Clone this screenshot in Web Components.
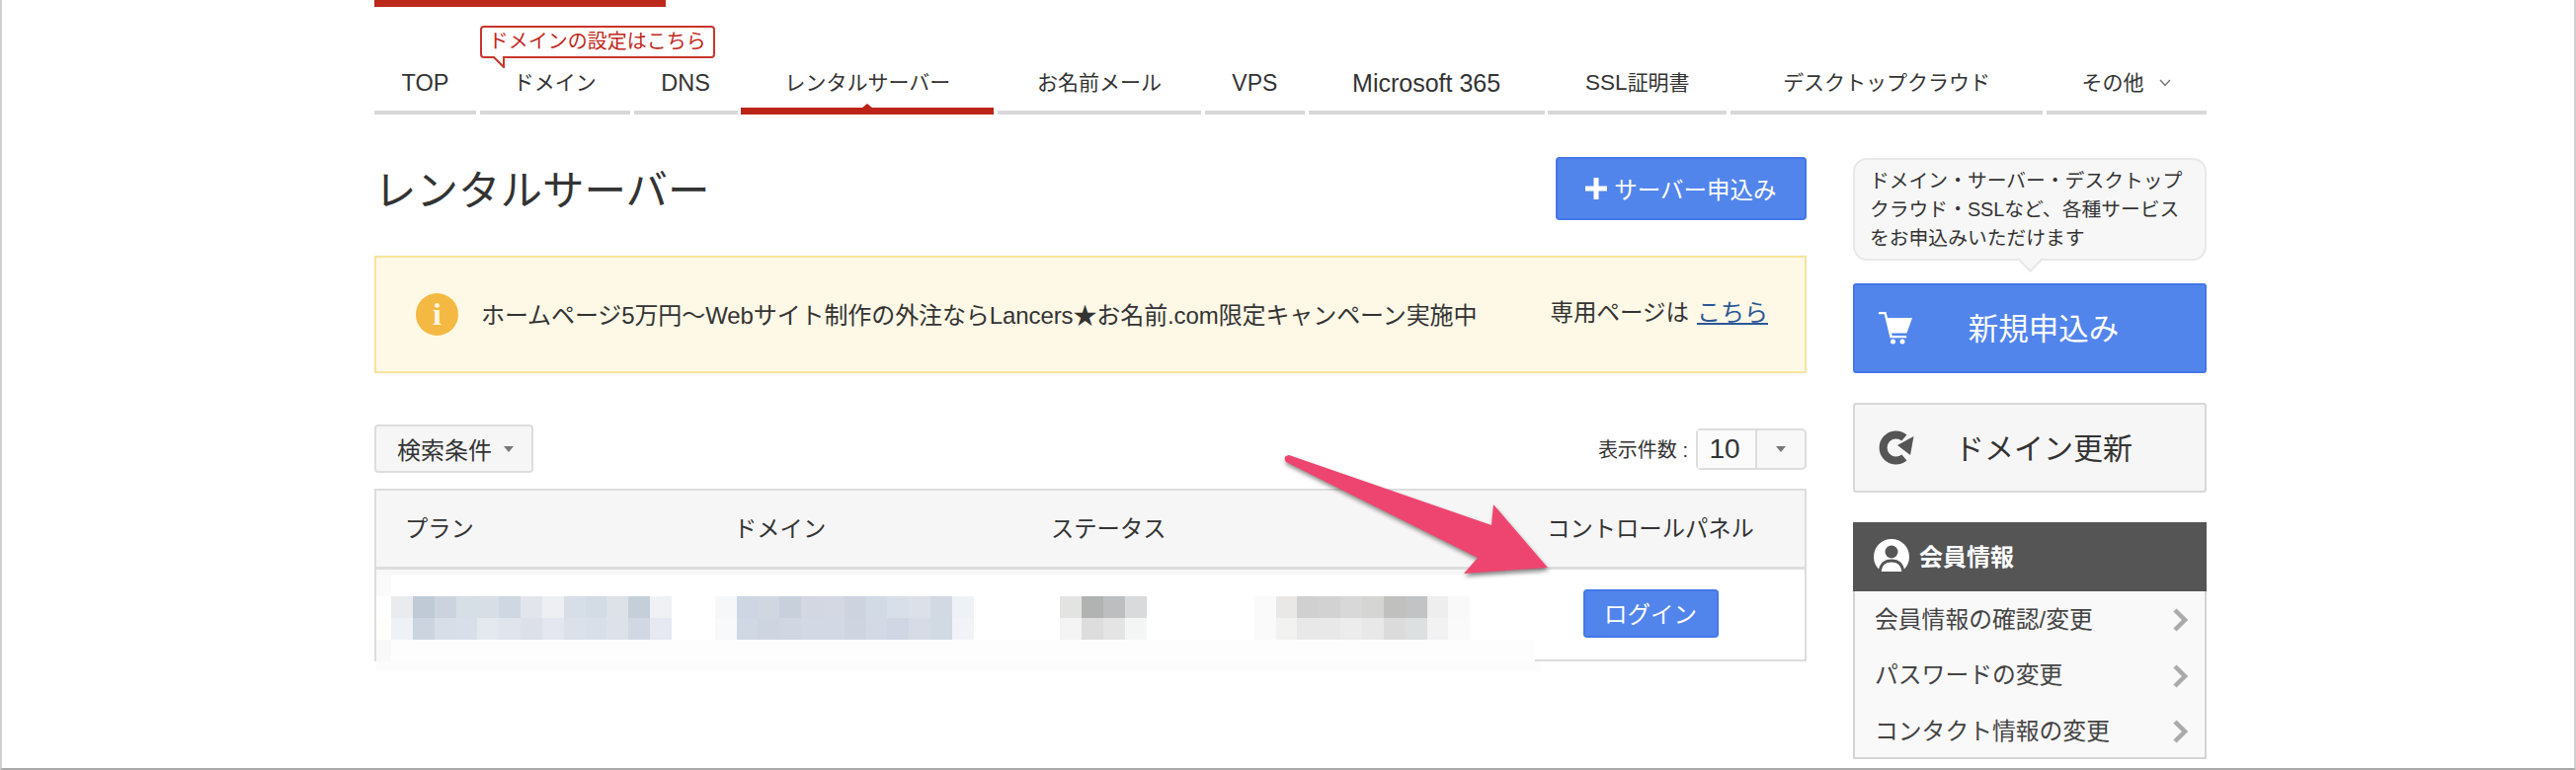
<!DOCTYPE html>
<html lang="ja">
<head>
<meta charset="utf-8">
<title>レンタルサーバー</title>
<style>
  html, body { margin: 0; height: 780px; overflow: hidden; background: #fff; }
  body { font-family: "Liberation Sans", "Noto Sans CJK JP", sans-serif; color: #333; }
</style>
</head>
<body>
<app-shell>
  <site-nav slot="nav">
    <nav-tab w="103" fs="23.5">TOP</nav-tab>
    <nav-tab w="152">ドメイン<hint-flag slot="flag">ドメインの設定はこちら</hint-flag></nav-tab>
    <nav-tab w="105" fs="23.5">DNS</nav-tab>
    <nav-tab w="256" active>レンタルサーバー</nav-tab>
    <nav-tab w="206">お名前メール</nav-tab>
    <nav-tab w="101" fs="23">VPS</nav-tab>
    <nav-tab w="239" fs="25">Microsoft 365</nav-tab>
    <nav-tab w="181"><span style="font-size:22.5px">SSL</span>証明書</nav-tab>
    <nav-tab w="316">デスクトップクラウド</nav-tab>
    <nav-tab w="162" more>その他</nav-tab>
  </site-nav>

  <page-head slot="main">
    レンタルサーバー
    <blue-button slot="action" big>サーバー申込み</blue-button>
  </page-head>
  <notice-bar slot="main" link="こちら" lead="専用ページは">ホームページ5万円〜Webサイト制作の外注ならLancers★お名前.com限定キャンペーン実施中</notice-bar>
  <result-toolbar slot="main"></result-toolbar>
  <plan-table slot="main"></plan-table>
  <pink-arrow slot="main"></pink-arrow>

  <side-bubble slot="side">ドメイン・サーバー・デスクトップ<br>クラウド・SSLなど、各種サービス<br>をお申込みいただけます</side-bubble>
  <side-action slot="side" kind="primary" icon="cart">新規申込み</side-action>
  <side-action slot="side" icon="renew">ドメイン更新</side-action>
  <member-panel slot="side"></member-panel>
</app-shell>

<script>
class AppShell extends HTMLElement {
  constructor() {
    super();
    this.attachShadow({ mode: "open" });
    this.shadowRoot.innerHTML = `
      <style>
        :host { display: block; box-sizing: border-box; height: 780px; overflow: hidden;
          border-left: 2px solid #d0d0d0; border-right: 2px solid #d0d0d0; border-bottom: 2px solid #aaa; }
        .wrap { width: 1855px; margin-left: 377px; }
        .brand { width: 295px; height: 7px; background: #bd2a1c; }
        .cols { display: flex; gap: 47px; padding-top: 43px; }
        .main { width: 1450px; position: relative; }
        .side { width: 358px; padding-top: 1px; }
      </style>
      <div class="wrap">
        <div class="brand"></div>
        <slot name="nav"></slot>
        <div class="cols">
          <div class="main"><slot name="main"></slot></div>
          <div class="side"><slot name="side"></slot></div>
        </div>
      </div>`;
  }
}

class SiteNav extends HTMLElement {
  constructor() {
    super();
    this.attachShadow({ mode: "open" });
    this.shadowRoot.innerHTML = `
      <style>
        :host { display: flex; justify-content: space-between; padding-top: 47px; }
      </style>
      <slot></slot>`;
  }
}

class NavTab extends HTMLElement {
  constructor() {
    super();
    this.attachShadow({ mode: "open" });
    const more = this.hasAttribute("more")
      ? `<svg width="12" height="8" viewBox="0 0 12 8"><path d="M1 1l5 5.5L11 1" fill="none" stroke="#777" stroke-width="1.5"/></svg>`
      : "";
    // latin labels run wider than the kana ones in the original font, so they get their own size
    const size = this.getAttribute("fs") || 21;
    this.shadowRoot.innerHTML = `
      <style>
        :host { display: block; position: relative; box-sizing: border-box; height: 62px;
          width: ${this.getAttribute("w")}px; border-bottom: 4px solid #d8d8d8; }
        :host([active]) { border-bottom: 7px solid #bd2418; }
        :host([active])::after { content: ""; position: absolute; left: 50%; bottom: 0; margin-left: -5px;
          border: 5px solid transparent; border-top: 0; border-bottom: 4px solid #bd2418; }
        .t { display: flex; align-items: center; justify-content: center; gap: 16px; height: 60px;
          font-size: ${size}px; line-height: 60px; }
      </style>
      <div class="t"><span><slot></slot></span>${more}</div>
      <slot name="flag"></slot>`;
  }
}

class HintFlag extends HTMLElement {
  constructor() {
    super();
    this.attachShadow({ mode: "open" });
    this.shadowRoot.innerHTML = `
      <style>
        :host { position: absolute; left: 0; top: -28px; box-sizing: border-box; height: 33px; padding: 0 7px;
          white-space: nowrap; background: #fff; border: 2px solid #c9352b; border-radius: 4px;
          color: #c2281c; font-size: 20px; line-height: 29px; }
        svg { position: absolute; left: 10px; top: 29px; }
      </style>
      <slot></slot>
      <svg width="14" height="12" viewBox="0 0 14 12"><path d="M1 0l11 11V0" fill="#fff" stroke="#c9352b" stroke-width="2"/></svg>`;
  }
}

class PageHead extends HTMLElement {
  constructor() {
    super();
    this.attachShadow({ mode: "open" });
    this.shadowRoot.innerHTML = `
      <style>
        :host { display: flex; align-items: center; justify-content: space-between; height: 64px; }
        h1 { margin: 0; padding-top: 6px; font-size: 42.5px; font-weight: 400; line-height: 58px; color: #333; }
      </style>
      <h1><slot></slot></h1>
      <slot name="action"></slot>`;
  }
}

class BlueButton extends HTMLElement {
  constructor() {
    super();
    this.attachShadow({ mode: "open" });
    const plus = this.hasAttribute("big")
      ? `<svg width="22" height="22" viewBox="0 0 22 22"><path d="M8.500 0h5v8.500H22v5h-8.500V22h-5v-8.500H0v-5h8.500z" fill="#fff"/></svg>`
      : "";
    this.shadowRoot.innerHTML = `
      <style>
        :host { display: flex; align-items: center; justify-content: center; box-sizing: border-box;
          background: #5285ec; border: 2px solid #4377e8; border-radius: 4px; color: #fff; font-size: 23.5px; }
        :host([big]) { width: 254px; height: 64px; }
        :host([small]) { width: 137px; height: 49px; padding-bottom: 2px; }
        svg { margin-right: 7px; }
      </style>
      ${plus}<slot></slot>`;
  }
}

class NoticeBar extends HTMLElement {
  constructor() {
    super();
    this.attachShadow({ mode: "open" });
    this.shadowRoot.innerHTML = `
      <style>
        :host { display: flex; align-items: center; box-sizing: border-box; height: 119px; margin-top: 36px;
          padding: 0 37px 0 40px; background: #fef8e6; border: 2px solid #f6e59a; box-shadow: 0 0 2px #eee;
          font-size: 24px; color: #333; }
        .i { flex: none; width: 43px; height: 43px; margin-right: 23px; border-radius: 50%; background: #f4b942;
          color: #fff6e2; text-align: center; font: bold 32px/43px "Liberation Serif", serif; }
        .m { white-space: nowrap; letter-spacing: -0.1px; padding-bottom: 2px; }
        .r { margin-left: auto; padding-bottom: 8px; white-space: nowrap; font-size: 23.5px; }
        a { margin-left: 8px; color: #2b5797; text-decoration: underline; font-size: 24px; }
      </style>
      <span class="i">i</span>
      <span class="m"><slot></slot></span>
      <span class="r">${this.getAttribute("lead")}<a>${this.getAttribute("link")}</a></span>`;
  }
}

class ResultToolbar extends HTMLElement {
  constructor() {
    super();
    this.attachShadow({ mode: "open" });
    this.shadowRoot.innerHTML = `
      <style>
        :host { display: flex; align-items: center; justify-content: space-between; height: 49px; margin-top: 52px; }
        .filter { display: flex; align-items: center; box-sizing: border-box; width: 161px; height: 49px; padding-left: 21px;
          background: #f6f6f6; border: 2px solid #ddd; border-radius: 4px; font-size: 24px; }
        .caret { width: 0; height: 0; border: 5px solid transparent; border-top: 6px solid #777; border-bottom: 0; }
        .filter .caret { margin-left: 12px; }
        .count { display: flex; align-items: center; font-size: 20px; }
        .sel { display: flex; box-sizing: border-box; width: 112px; height: 42px; margin-left: 8px;
          background: #f8f8f8; border: 2px solid #ddd; border-radius: 5px; }
        .val { box-sizing: border-box; width: 60px; padding-right: 4px; border-right: 2px solid #ddd; background: #fbfbfb;
          font-size: 28px; line-height: 38px; text-align: center; }
        .arr { flex: 1; display: flex; align-items: center; justify-content: center; }
      </style>
      <div class="filter">検索条件<span class="caret"></span></div>
      <div class="count">表示件数 :<div class="sel"><div class="val">10</div><div class="arr"><span class="caret"></span></div></div></div>`;
  }
}

class BlurMosaic extends HTMLElement {
  constructor() {
    super();
    this.attachShadow({ mode: "open" });
    // colours sampled off the pixelated area, one list per row, first entry is the narrow left strip
    const rows = [
      "fafafa",
      "ffffff e9ebef c0cad7 cdd3de d6dee6 d8dee6 cfd7e3 e2e6ec edeff3 d7dee7 d3dbe5 dde2e8 c5cfda eff1f5 ffffff ffffff f6f7f9 cdd6e2 d1d7e1 c8d0dc d2d7e1 d3d8e2 cdd3df d1dae5 d9dfe8 dbe0e9 d2d9e3 eef2f7 ffffff ffffff ffffff ffffff e3e3e2 b1b3b2 bcbec0 d9dadc ffffff ffffff ffffff ffffff ffffff fafafa e9e8e6 d0d0d0 d2d2d3 d8d8d8 d5d5d4 c0c0be c2c3c5 eeeeee f9f9f9",
      "fefefa eef2f7 ccd4e0 d8dee7 d9dfe8 e4e8ef e0e5ed dbe0e9 e4e7ef dbe0e9 d9dfe8 dde2ea d2d8e3 e6e9f1 ffffff ffffff f8f9fb d0d8e4 ced5e1 d0d6e2 d2d8e4 d2d9e4 ced5e1 d3d9e5 d0d6e3 d6dbe6 d1d9e3 f1f3f8 ffffff ffffff ffffff ffffff f4f4f4 dcdddc e3e4e3 f4f5f5 ffffff ffffff ffffff ffffff ffffff fafafa f2f2f0 e8e8e8 e8e8e8 ececec e8e8e8 dbdbdb dde0e0 f2f2f2 fafafa",
      "f9f9f9"
    ];
    let cells = "";
    rows.forEach((row, y) => {
      const list = row.split(" ");
      for (let x = 0; x < 54; x++) {
        const c = list[x] || (y === 3 ? "fdfdfd" : "ffffff");
        cells += `<i style="background:#${c}"></i>`;
      }
    });
    this.shadowRoot.innerHTML = `
      <style>
        :host { position: absolute; left: 0; top: 80px; display: block; width: 1179px; }
        .band { height: 5px; background: #f8f8f8; }
        .grid { display: grid; grid-template-columns: 15px repeat(53, 21.85px); grid-auto-rows: 22px; }
        .foot { height: 10px; background: #fcfcfc; }
      </style>
      <div class="band"></div>
      <div class="grid">${cells}</div>
      <div class="foot"></div>`;
  }
}

class PlanTable extends HTMLElement {
  constructor() {
    super();
    this.attachShadow({ mode: "open" });
    this.shadowRoot.innerHTML = `
      <style>
        :host { display: block; position: relative; box-sizing: border-box; height: 175px; margin-top: 16px;
          border: 2px solid #ddd; font-size: 23.3px; }
        .row { display: grid; grid-template-columns: 333px 321px 1fr 312px; align-items: center; }
        .head { height: 77px; background: #f6f6f6; border-bottom: 3px solid #ddd; padding-bottom: 0; }
        .head div { margin-top: -3px; }
        .head div:not(:last-child) { padding-left: 29px; }
        .last { text-align: center; }
        .body { height: 91px; }
        .body blue-button { margin: -2px auto 0; }
      </style>
      <div class="row head"><div>プラン</div><div>ドメイン</div><div>ステータス</div><div class="last">コントロールパネル</div></div>
      <div class="row body"><div></div><div></div><div></div><div class="last"><blue-button small>ログイン</blue-button></div></div>
      <blur-mosaic></blur-mosaic>`;
  }
}

class PinkArrow extends HTMLElement {
  constructor() {
    super();
    this.attachShadow({ mode: "open" });
    this.shadowRoot.innerHTML = `
      <style>
        :host { position: absolute; left: 911px; top: 291px; display: block; width: 290px; height: 145px; }
        svg { overflow: visible; filter: drop-shadow(1px 3px 2px rgba(0,0,0,.45)); }
      </style>
      <svg width="290" height="145" viewBox="0 0 290 145">
        <path d="M15 11L220 82 222 61 277 125 192 131 206 115 12 18Q8 12 15 11z" fill="#ee4570"/>
      </svg>`;
  }
}

class SideBubble extends HTMLElement {
  constructor() {
    super();
    this.attachShadow({ mode: "open" });
    this.shadowRoot.innerHTML = `
      <style>
        :host { display: block; position: relative; box-sizing: border-box; height: 104px; padding: 7px 15px 0;
          background: #f7f7f7; border: 2px solid #e8e8e8; border-radius: 14px; font-size: 19.8px; line-height: 29px; white-space: nowrap; }
        :host::after { content: ""; position: absolute; left: 50%; bottom: -10px; width: 17px; height: 17px; margin-left: -9px;
          background: #f7f7f7; border: solid #e8e8e8; border-width: 0 2px 2px 0; transform: rotate(45deg); }
      </style>
      <slot></slot>`;
  }
}

const sideIcons = {
  cart: `<svg width="34" height="33" viewBox="0 0 34 33"><path fill="#fff" d="M0 0h7.500l1.500 6h25l-5.500 15.500H13l.7 2.500h14.500v2.200H11.500L5.700 2.300H0z"/><circle cx="14.500" cy="30" r="2.500" fill="#fff"/><circle cx="24" cy="30" r="2.500" fill="#fff"/></svg>`,
  renew: `<svg width="36" height="36" viewBox="0 0 36 36"><path d="M25.900 7.500A13 13 0 1 0 25.900 27.500" fill="none" stroke="#555" stroke-width="8"/><path d="M19 15L35.500 6 32 25z" fill="#555"/></svg>`
};

class SideAction extends HTMLElement {
  constructor() {
    super();
    this.attachShadow({ mode: "open" });
    this.shadowRoot.innerHTML = `
      <style>
        :host { display: flex; align-items: center; box-sizing: border-box; height: 91px; margin-top: 30px; padding-left: 24px;
          background: #f6f6f6; border: 2px solid #d8d8d8; border-radius: 3px; font-size: 30px; color: #333; }
        :host([kind="primary"]) { margin-top: 23px; background: #5285ec; border-color: #4377e8; color: #fff; font-size: 30.5px; }
        .ic { flex: none; width: 36px; margin-right: -32px; display: flex; }
        .tx { flex: 1; text-align: center; padding-bottom: 3px; }
      </style>
      <span class="ic">${sideIcons[this.getAttribute("icon")]}</span>
      <span class="tx"><slot></slot></span>`;
  }
}

class MemberPanel extends HTMLElement {
  constructor() {
    super();
    this.attachShadow({ mode: "open" });
    const links = ["会員情報の確認/変更", "パスワードの変更", "コンタクト情報の変更"];
    this.shadowRoot.innerHTML = `
      <style>
        :host { display: block; margin-top: 30px; }
        .hd { display: flex; align-items: center; height: 70px; padding-left: 21px; background: #555; color: #fff;
          font-size: 24px; font-weight: 700; }
        .hd svg { margin-right: 10px; }
        .hd span { padding-bottom: 3px; }
        ul { list-style: none; margin: 0; padding: 1px 0 0; box-sizing: border-box; height: 170px; background: #f9f9f9;
          border: solid #d4d4d4; border-width: 0 2px 2px; }
        li { display: flex; align-items: center; justify-content: space-between; height: 56.5px; padding: 0 17px 0 20px;
          font-size: 23.8px; color: #444; }
        li span { padding-bottom: 6px; }
        li svg { flex: none; }
      </style>
      <div class="hd">
        <svg width="36" height="36" viewBox="0 0 36 36">
          <circle cx="18" cy="18" r="18" fill="#fff"/>
          <circle cx="18" cy="13" r="6.500" fill="#555"/>
          <path d="M6 34C7 24 12 22 18 22s11 2 12 12" fill="#fff" stroke="#555" stroke-width="3"/>
          <rect x="0" y="33" width="36" height="3" fill="#555"/>
        </svg>
        <span>会員情報</span>
      </div>
      <ul>${links.map((l) => `<li><span>${l}</span><svg width="15" height="24" viewBox="0 0 15 24"><path d="M2 2l10 10L2 22" fill="none" stroke="#aaa" stroke-width="4.500"/></svg></li>`).join("")}</ul>`;
  }
}

customElements.define("app-shell", AppShell);
customElements.define("site-nav", SiteNav);
customElements.define("nav-tab", NavTab);
customElements.define("hint-flag", HintFlag);
customElements.define("page-head", PageHead);
customElements.define("blue-button", BlueButton);
customElements.define("notice-bar", NoticeBar);
customElements.define("result-toolbar", ResultToolbar);
customElements.define("blur-mosaic", BlurMosaic);
customElements.define("plan-table", PlanTable);
customElements.define("pink-arrow", PinkArrow);
customElements.define("side-bubble", SideBubble);
customElements.define("side-action", SideAction);
customElements.define("member-panel", MemberPanel);
</script>
</body>
</html>
